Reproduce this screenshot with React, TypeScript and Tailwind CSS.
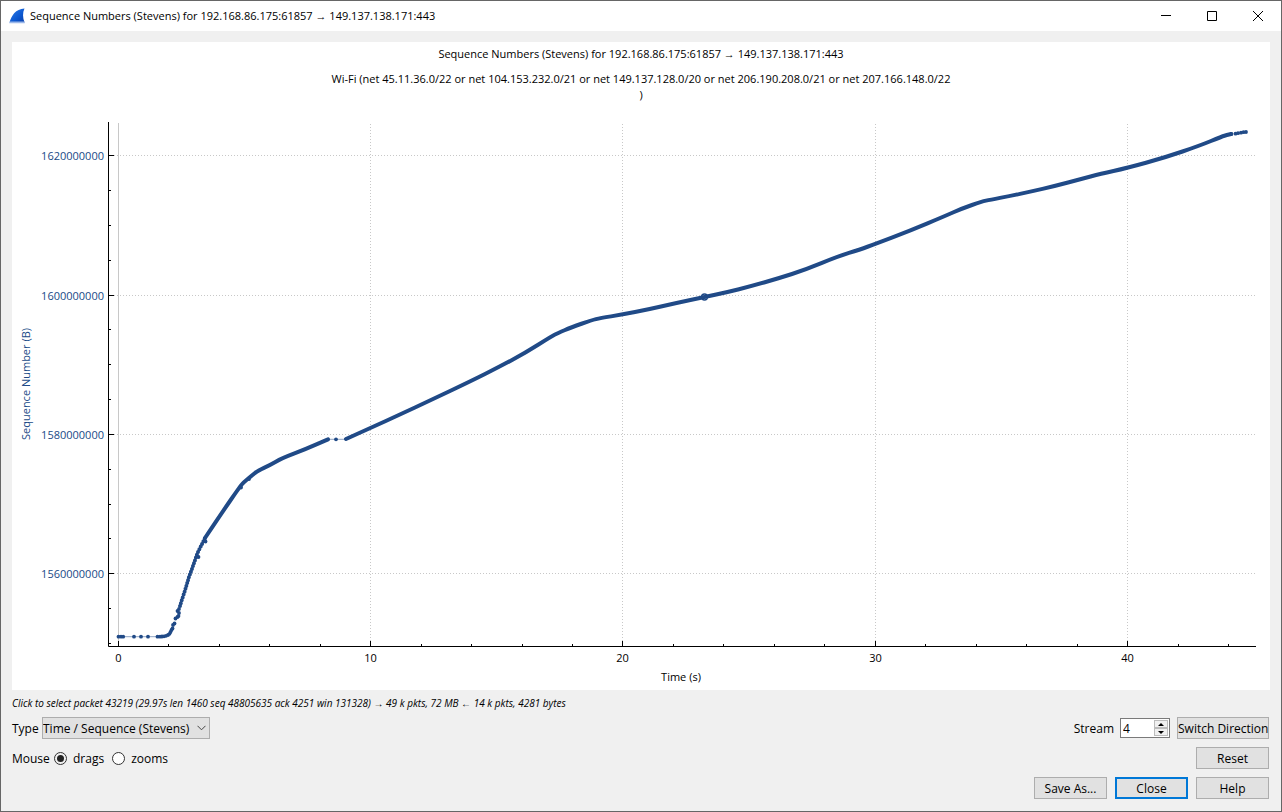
import { useState } from "react";

const strayPackets = [
  [118.5, 636.7], [121, 636.7], [123.2, 636.7], [134, 636.7], [141, 636.7],
  [148, 636.7], [157.5, 636.7], [160, 636.7], [162, 636.5], [164, 636.3],
  [166, 635.8], [168, 635], [169.5, 633.8], [170.5, 632], [171.5, 630],
  [172.5, 628.5], [173, 625], [174.5, 623.5], [175.5, 618.5], [177.5, 617],
  [177.5, 611], [178.5, 616], [179, 613], [179, 609], [198.5, 557],
  [205.5, 541.5], [241, 487.5], [249, 479], [336, 439.3], [1231.5, 134],
  [1235.5, 133.7], [1238, 133.2], [1241, 132.7], [1243.5, 132.2], [1246, 132],
];

const slowStart = "180,606 181.5,601 185,590.5 189,577 193,566 197.5,553 201,546 205,538";

const climb = [
  [205, 538], [221.7, 513], [240, 486.5], [244, 482], [249, 478], [253, 474.5],
  [258, 470.7], [270, 465], [281.7, 458.3], [306, 449], [328, 439.3],
];

const transfer = [
  [346, 439], [370.5, 428], [400, 414.5], [430, 400.5], [470, 381.5],
  [500, 366.5], [525, 353], [552, 336], [558, 333], [571, 327.5], [592, 320],
  [600, 318.2], [622, 314.5], [648, 309.5], [674, 303.5], [704.5, 297],
  [728, 292], [750, 286.5], [778, 278.5], [806, 269.5], [838, 256.3],
  [860, 249.5], [875, 244], [910, 230.7], [945, 216], [962, 208.5],
  [982, 201.5], [990, 199.8], [1010, 196], [1030, 191.7], [1055, 186],
  [1083, 178.5], [1100, 174], [1127, 168], [1165, 157.5], [1200, 145.5],
  [1222, 136.5], [1227, 135], [1231, 134],
];

const yTicks = [
  { label: "1620000000", y: 155.5 },
  { label: "1600000000", y: 295.5 },
  { label: "1580000000", y: 434.5 },
  { label: "1560000000", y: 573.5 },
];

const yMinorTicks = [
  190.5, 225.5, 260.5, 329.5, 364.5, 399.5, 469.5, 504.5, 538.5, 608.5, 643.5,
];

const xTicks = [
  { label: "0", x: 118.5 },
  { label: "10", x: 370.5 },
  { label: "20", x: 622.5 },
  { label: "30", x: 875.5 },
  { label: "40", x: 1127.5 },
];

const xMinorTicks = [
  168.5, 219.5, 269.5, 320.5, 421.5, 471.5, 522.5, 572.5, 673.5, 723.5, 774.5,
  824.5, 925.5, 976.5, 1026.5, 1077.5, 1178.5, 1228.5,
];

const buttonClass =
  "h-[22px] border border-[#adadad] bg-[#e1e1e1] pt-[2px] text-center leading-[18px] hover:border-[#0078d7] hover:bg-[#e5f1fb]";

// Rounds the joints by curving through the midpoint of each segment
function smoothPath(points: number[][]) {
  let d = `M${points[0].join(" ")}`;
  for (let i = 1; i < points.length - 1; i++) {
    const [x, y] = points[i];
    const [nextX, nextY] = points[i + 1];
    d += `Q${x} ${y} ${(x + nextX) / 2} ${(y + nextY) / 2}`;
  }
  return `${d}L${points[points.length - 1].join(" ")}`;
}

function TitleBar() {
  return (
    <header className="flex h-[30px] items-center bg-white">
      <svg className="ml-2 size-4 shrink-0" viewBox="0 0 16 16" aria-hidden="true">
        <defs>
          <linearGradient id="fin" x1="0" y1="0" x2="1" y2="1">
            <stop offset="0" stopColor="#2f7de8" />
            <stop offset="0.6" stopColor="#0b57d0" />
            <stop offset="1" stopColor="#0a3fa8" />
          </linearGradient>
        </defs>
        <path
          d="M0.5 14.5C2.5 7.5 6.5 1 15.5 0.5C13.5 4.5 13.6 10 15.6 14.5Z"
          fill="url(#fin)"
        />
        <path d="M0.2 15.3L1 13.6H15.2L15.8 15.3Z" fill="#9db9ea" />
      </svg>
      <h1 className="ml-[5px] flex-1 text-[11px]">
        Sequence Numbers (Stevens) for 192.168.86.175:61857 → 149.137.138.171:443
      </h1>
      <div className="flex h-full">
        <button type="button" aria-label="Minimize" className="grid w-[46px] place-items-center hover:bg-[#e5e5e5]">
          <svg className="size-[10px]" viewBox="0 0 10 10" stroke="#000" fill="none">
            <path d="M0 4.5H10" />
          </svg>
        </button>
        <button type="button" aria-label="Maximize" className="grid w-[46px] place-items-center hover:bg-[#e5e5e5]">
          <svg className="size-[10px]" viewBox="0 0 10 10" stroke="#000" fill="none">
            <path d="M0.5 0.5H9.5V9.5H0.5Z" />
          </svg>
        </button>
        <button type="button" aria-label="Close window" className="grid w-[46px] place-items-center hover:bg-[#e81123]">
          <svg className="size-[10px]" viewBox="0 0 10 10" stroke="#000" fill="none">
            <path d="M0 0L10 10M10 0L0 10" />
          </svg>
        </button>
      </div>
    </header>
  );
}

function SequenceChart() {
  return (
    <svg className="block h-auto w-full bg-white text-[11px]" viewBox="12 42 1258 648">
      <g textAnchor="middle" fill="#000">
        <text x="641" y="58">
          Sequence Numbers (Stevens) for 192.168.86.175:61857 → 149.137.138.171:443
        </text>
        <text x="641" y="83">
          Wi-Fi (net 45.11.36.0/22 or net 104.153.232.0/21 or net 149.137.128.0/20 or net 206.190.208.0/21 or net 207.166.148.0/22
        </text>
        <text x="641" y="99">)</text>
        <text x="681" y="681">Time (s)</text>
      </g>
      <text x="30" y="384" textAnchor="middle" fill="#204a87" transform="rotate(-90 30 384)">
        Sequence Number (B)
      </text>

      <g stroke="#c8c8c8" strokeDasharray="1 2">
        {yTicks.map((tick) => (
          <path key={tick.label} d={`M114 ${tick.y}H1256`} />
        ))}
        {xTicks.slice(1).map((tick) => (
          <path key={tick.label} d={`M${tick.x} 124V641`} />
        ))}
      </g>
      <path d="M118.5 123V642" stroke="#c8c8c8" />

      <path d="M108.5 122V646.5H1256" stroke="#000" fill="none" />
      <g stroke="#000">
        {yTicks.map((tick) => (
          <path key={tick.label} d={`M109 ${tick.y}H114`} />
        ))}
        {yMinorTicks.map((y) => (
          <path key={y} d={`M109 ${y}H111`} />
        ))}
        {xTicks.map((tick) => (
          <path key={tick.label} d={`M${tick.x} 641V646`} />
        ))}
        {xMinorTicks.map((x) => (
          <path key={x} d={`M${x} 644V646`} />
        ))}
      </g>
      <g fill="#204a87" textAnchor="end">
        {yTicks.map((tick) => (
          <text key={tick.label} x="104" y={tick.y + 4.5}>
            {tick.label}
          </text>
        ))}
      </g>
      <g textAnchor="middle">
        {xTicks.map((tick) => (
          <text key={tick.label} x={tick.x} y="662">
            {tick.label}
          </text>
        ))}
      </g>

      <path d="M118.5 636.7H162M328 439.3H346" stroke="#204a87" strokeOpacity="0.5" />
      <g fill="none" stroke="#204a87" strokeWidth="4" strokeLinecap="round">
        <polyline points={slowStart} strokeDasharray="0 3" />
        <polyline points={slowStart} strokeWidth="2" />
        <path d={smoothPath(climb)} />
        <path d={smoothPath(transfer)} />
      </g>
      <g fill="#204a87">
        {strayPackets.map(([x, y], i) => (
          <circle key={i} cx={x} cy={y} r="1.9" />
        ))}
      </g>
      <circle cx="704.5" cy="297" r="3" fill="none" stroke="#204a87" strokeWidth="1.3" />
    </svg>
  );
}

export default function App() {
  const [stream, setStream] = useState(4);

  return (
    <main className="border border-[#666] bg-[#f0f0f0] font-['Open_Sans','Segoe_UI',sans-serif] text-[12px] text-black">
      <TitleBar />
      <div className="px-[11px] pt-[11px] pb-3">
        <SequenceChart />
        <p className="h-[27px] text-[10px] leading-[27px] italic">
          Click to select packet 43219 (29.97s len 1460 seq 48805635 ack 4251 win 131328) → 49 k pkts, 72 MB ← 14 k pkts, 4281 bytes
        </p>

        <div className="flex flex-col gap-2 pr-px">
          <div className="flex h-[22px] items-center">
            <label htmlFor="type" className="w-[30px] pt-[2px]">Type</label>
            <div className="relative">
              <select
                id="type"
                className="block h-[22px] w-[168px] appearance-none border border-[#adadad] bg-[#e1e1e1] pt-[2px] leading-[18px]"
              >
                <option>Time / Sequence (Stevens)</option>
              </select>
              <svg className="pointer-events-none absolute top-2 right-1 h-[6px] w-[9px]" viewBox="0 0 9 6" fill="none" stroke="#444" aria-hidden="true">
                <path d="M0.5 0.8L4.5 4.8L8.5 0.8" />
              </svg>
            </div>
            <label htmlFor="stream" className="mr-[6px] ml-auto pt-[2px]">Stream</label>
            <div className="mr-[7px] flex h-5 w-[50px] border border-[#7a7a7a] bg-white p-px">
              <input
                id="stream"
                type="text"
                inputMode="numeric"
                value={stream}
                onChange={(e) => setStream(Number(e.target.value) || 0)}
                className="w-0 flex-1 pt-px pl-px outline-none"
              />
              <div className="flex w-[14px] flex-col">
                <button
                  type="button"
                  aria-label="Next stream"
                  onClick={() => setStream(stream + 1)}
                  className="grid flex-1 place-items-center border border-[#bcbcbc] bg-[#f0f0f0]"
                >
                  <svg className="h-[3px] w-[6px]" viewBox="0 0 6 3"><path d="M0 3L3 0L6 3Z" /></svg>
                </button>
                <button
                  type="button"
                  aria-label="Previous stream"
                  onClick={() => setStream(Math.max(0, stream - 1))}
                  className="grid flex-1 place-items-center border border-[#bcbcbc] bg-[#f0f0f0]"
                >
                  <svg className="h-[3px] w-[6px]" viewBox="0 0 6 3"><path d="M0 0L3 3L6 0Z" /></svg>
                </button>
              </div>
            </div>
            <button type="button" className={`${buttonClass} w-[92px] whitespace-nowrap`}>
              Switch Direction
            </button>
          </div>

          <fieldset className="flex h-[22px] items-center">
            <legend className="float-left w-[42px] pt-[2px]">Mouse</legend>
            <label className="flex items-center gap-[6px]">
              <input
                type="radio"
                name="mouse"
                defaultChecked
                className="size-[13px] appearance-none rounded-full border border-[#333] bg-white bg-clip-content p-[2px] checked:bg-[#222]"
              />
              <span className="pt-[2px]">drags</span>
            </label>
            <label className="ml-2 flex items-center gap-[6px]">
              <input
                type="radio"
                name="mouse"
                className="size-[13px] appearance-none rounded-full border border-[#333] bg-white checked:bg-[#222]"
              />
              <span className="pt-[2px]">zooms</span>
            </label>
            <button type="button" className={`${buttonClass} ml-auto w-[73px]`}>Reset</button>
          </fieldset>

          <div className="flex justify-end gap-2">
            <button type="button" className={`${buttonClass} w-[73px]`}>Save As...</button>
            <button type="button" className="h-[22px] w-[73px] border-2 border-[#0078d7] bg-[#e1e1e1] pt-[2px] leading-4">
              Close
            </button>
            <button type="button" className={`${buttonClass} w-[73px]`}>Help</button>
          </div>
        </div>
      </div>
    </main>
  );
}
